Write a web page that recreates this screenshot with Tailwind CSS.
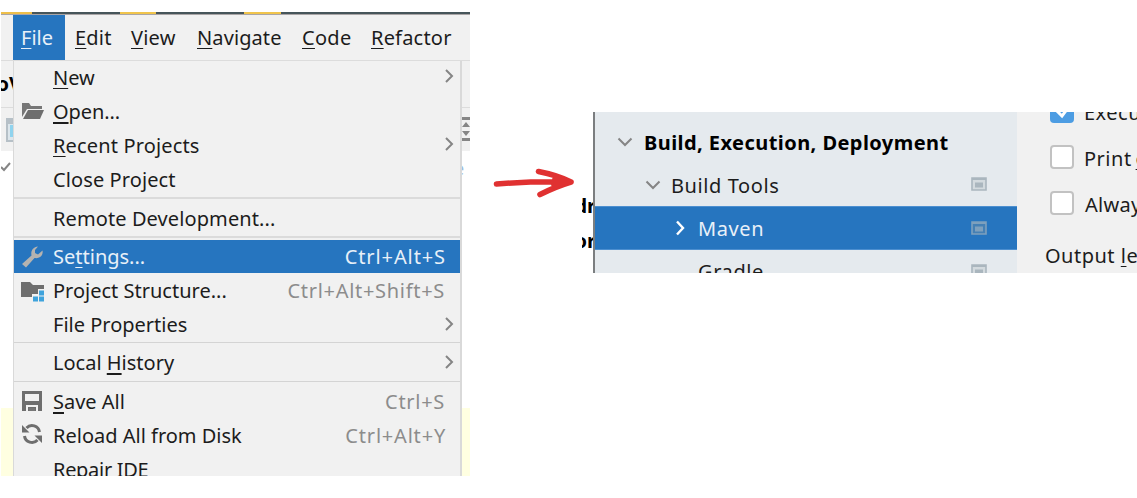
<!DOCTYPE html>
<html lang="en">
<head>
<meta charset="utf-8">
<title>Maven settings</title>
<script src="https://cdn.jsdelivr.net/npm/@tailwindcss/browser@4"></script>
</head>
<body class="relative h-[498px] w-[1137px] overflow-hidden bg-white font-['Noto_Sans','Open_Sans',sans-serif] text-[20px] leading-none whitespace-nowrap text-[#1c1c1c] [&_u]:decoration-1 [&_u]:underline-offset-[3px] [&_u]:[text-decoration-skip-ink:none]">

<div class="flex items-start">
  <!-- IDE window with the File menu open -->
  <section class="relative mt-3 ml-px h-[464px] w-[469px] shrink-0 overflow-hidden bg-white">
    <div class="flex h-[2px] bg-[#46555a]">
      <div class="w-[31px] bg-[#eebf4a]"></div>
      <div class="ml-[88px] w-[36px] bg-[#f0c44c]"></div>
      <div class="ml-[88px] w-[37px] bg-[#f0c44c]"></div>
    </div>
    <nav class="flex h-[47px] items-center border-t border-b border-t-[#a9a5a6] border-b-[#dcdcdc] bg-[#f1f1f1] pl-3">
      <div class="flex h-[45px] w-[52px] items-center bg-[#2675bf] pt-px pl-2 text-[#e8f0f8]"><span><u>F</u>ile</span></div>
      <span class="ml-[10px] w-[56px] pt-px tracking-[0.2px]"><u>E</u>dit</span>
      <span class="w-[66px] pt-px tracking-[0.2px]"><u>V</u>iew</span>
      <span class="w-[105px] pt-px tracking-[0.1px]"><u>N</u>avigate</span>
      <span class="w-[69px] pt-px tracking-[0.3px]"><u>C</u>ode</span>
      <span class="pt-px tracking-[0.2px]"><u>R</u>efactor</span>
    </nav>

    <div class="flex h-[415px]">
      <!-- strip left of the menu -->
      <div class="flex w-3 shrink-0 flex-col overflow-hidden">
        <div class="flex h-[47px] items-center justify-end overflow-hidden border-b border-[#dcdcdc] bg-[#f1f1f1]"><b class="mr-[-9px] text-black">oV</b></div>
        <div class="h-[43px] bg-[#f1f1f1] pt-[10px] pl-[5px]"><div class="h-6 w-5 border-2 border-t-[6px] border-[#b6c0c7] bg-[#dce6ec] p-px"><div class="ml-px h-3 w-4 bg-[#8fd3ee]"></div></div></div>
        <div class="h-[257px] pt-[11px]"><svg class="h-3 w-3" viewBox="0 0 12 12"><path d="M0 5l3 3 6-7" fill="none" stroke="#858585" stroke-width="2"/></svg></div>
        <div class="h-[68px] bg-[#ffffe1]"></div>
      </div>

      <!-- File menu -->
      <div class="w-[449px] shrink-0 border-r-2 border-l border-[#d9d9d9] bg-[#f1f1f1]">
        <div class="flex h-[34px] items-center pl-[39px] pr-[5px]"><span class="flex-1"><u>N</u>ew</span><svg class="-mt-1 h-4 w-3" viewBox="0 0 12 16"><path d="M3 2l6 6-6 6" fill="none" stroke="#858585" stroke-width="2"/></svg></div>
        <div class="flex h-[34px] items-center pl-[7px]">
          <svg class="mr-2 h-6 w-6" viewBox="0 0 24 24"><path d="M1 3h7l2 3h11v3H6L1 17z" fill="#777"/><path d="M7 10h16l-4 9H2z" fill="#6e6e6e"/></svg>
          <span class="-tracking-[0.1px]"><u class="!decoration-2">O</u>pen...</span></div>
        <div class="flex h-[34px] items-center pl-[39px] pr-[5px]"><span class="flex-1 tracking-[0.15px]"><u>R</u>ecent Projects</span><svg class="-mt-1 h-4 w-3" viewBox="0 0 12 16"><path d="M3 2l6 6-6 6" fill="none" stroke="#858585" stroke-width="2"/></svg></div>
        <div class="flex h-[34px] items-center pl-[39px]"><span class="tracking-[0.1px]">Close Project</span></div>
        <div class="h-[3px] border-t-2 border-[#dbdbdb]"></div>
        <div class="flex h-9 items-center pt-px pl-[39px]"><span class="tracking-[0.1px]">Remote Development...</span></div>
        <div class="h-[4px] border-t-2 border-[#dbdbdb]"></div>
        <div class="flex h-[33px] items-center bg-[#2675bf] pl-[7px] text-[#e8f0f8]">
          <svg class="mr-2 h-6 w-6" viewBox="0 0 24 24"><path d="M1 19L10.500 10.500C9.500 6 12 2 17 1.500L14 5v3l3 1.500L21.500 5.500C22.500 10 19 14 13.500 13L5 22.500z" fill="#b5b3b0"/></svg>
          <span class="flex-1">Se<u>t</u>tings...</span><span class="mr-[14px] tracking-[0.9px]">Ctrl+Alt+S</span></div>
        <div class="flex h-[35px] items-center pl-[7px]">
          <svg class="mr-2 h-6 w-6" viewBox="0 0 24 24"><path d="M0 3h9l3 3h11v4h-6v5h-6v3H0z" fill="#6e6e6e"/><path d="M18 11.500h5v5h-5zM18 17.500h5v5h-5zM12 17.500h5v5h-5z" fill="#3fa3dc"/></svg>
          <span class="flex-1">Project Structure...</span><span class="mr-[15px] tracking-[0.7px] text-[#8c8c8c]">Ctrl+Alt+Shift+S</span></div>
        <div class="flex h-[33px] items-center pl-[39px] pr-[5px]"><span class="flex-1">File Properties</span><svg class="-mt-[2px] h-4 w-3" viewBox="0 0 12 16"><path d="M3 2l6 6-6 6" fill="none" stroke="#858585" stroke-width="2"/></svg></div>
        <div class="mt-px h-[3px] border-t border-[#d4d4d4]"></div>
        <div class="flex h-9 items-center pl-[39px] pr-[5px]"><span class="flex-1">Local <u class="!decoration-2">H</u>istory</span><svg class="-mt-[2px] h-4 w-3" viewBox="0 0 12 16"><path d="M3 2l6 6-6 6" fill="none" stroke="#858585" stroke-width="2"/></svg></div>
        <div class="h-[3px] border-t border-[#d4d4d4]"></div>
        <div class="flex h-[35px] items-center pl-[7px]">
          <svg class="-mt-[2px] mr-2 h-6 w-6" viewBox="0 0 24 24"><path fill-rule="evenodd" d="M1 2h20v20H1zM4 5v7h14V5zM5 16v6h2v-4h8v4h2v-6z" fill="#6e6e6e"/><path d="M8 19h6v3H8z" fill="#777"/></svg>
          <span class="flex-1"><u class="!decoration-2">S</u>ave All</span><span class="mr-[15px] tracking-[0.7px] text-[#8c8c8c]">Ctrl+S</span></div>
        <div class="flex h-[34px] items-center pl-[7px]">
          <svg class="-mt-[4px] mr-2 h-6 w-6" viewBox="0 0 24 24"><path d="M5.500 6A7.500 7.500 0 0 1 18.500 10M16.500 18A7.500 7.500 0 0 1 3.500 14" fill="none" stroke="#6e6e6e" stroke-width="3"/><path d="M1 3v7.500h7.500zM21 21v-7.500h-7.500z" fill="#6e6e6e"/></svg>
          <span class="flex-1">Reload All from Disk</span><span class="mr-[14px] tracking-[0.8px] text-[#8c8c8c]">Ctrl+Alt+Y</span></div>
        <div class="flex h-[34px] items-center pl-[39px]"><span class="-tracking-[0.3px]">Repair IDE</span></div>
      </div>

      <!-- strip right of the menu -->
      <div class="flex flex-1 flex-col overflow-hidden">
        <div class="h-[47px] border-b border-[#dcdcdc] bg-[#f1f1f1]"></div>
        <div class="h-[43px] bg-[#f1f1f1] pt-[9px]"><svg class="h-6 w-2" viewBox="0 0 8 24"><path d="M0 0h8v3H0zM0 21h8v3H0zM0 10l4-5 4 5zM0 14l4 5 4-5z" fill="#858585"/></svg></div>
        <div class="h-[257px] pt-[8px]"><div class="-ml-[8px] text-[18px] text-[#9dbbe0]">e</div></div>
        <div class="h-[68px] bg-[#ffffe1]"></div>
      </div>
    </div>
  </section>

  <!-- Hand-drawn arrow -->
  <svg class="mt-[160px] ml-[20px] h-[50px] w-[90px] shrink-0" viewBox="490 160 90 50"><path d="M496.500 184Q535 181 571 182M538.500 171.500Q557 175 571 182Q556 186.500 540 194.500M555 179L571 182L554 185" fill="none" stroke="#e03131" stroke-width="5.600" stroke-linecap="round" stroke-linejoin="round"/></svg>

  <!-- Settings dialog -->
  <section class="mt-[112px] ml-[2px] flex h-[161px] w-[555px] shrink-0 overflow-hidden">
    <div class="flex w-[11px] shrink-0 flex-col items-end overflow-hidden pt-[84px] font-bold text-black"><span class="-mr-[3px]">dr</span><span class="-mr-[3px] mt-[15px]">or</span></div>
    <div class="w-[424px] shrink-0 border-l-2 border-[#7b7e80] bg-[#e5eaee]">
      <div class="flex h-[60px] items-center pl-[22px]"><svg class="mr-[11px] h-4 w-4" viewBox="0 0 16 16"><path d="M1.500 4.500l6.500 6.500 6.500-6.500" fill="none" stroke="#858585" stroke-width="2"/></svg><b class="pt-[2px] tracking-[0.44px] text-black">Build, Execution, Deployment</b></div>
      <div class="flex h-[34px] items-center pb-[8px] pl-[50px] pr-[30px]"><svg class="mr-[10px] h-4 w-4" viewBox="0 0 16 16"><path d="M1.500 4.500l6.500 6.500 6.500-6.500" fill="none" stroke="#858585" stroke-width="2"/></svg><span class="flex-1 pt-[2px] tracking-[0.6px]">Build Tools</span><svg class="-mt-[2px] h-[14px] w-[16px]" viewBox="0 0 16 14"><path d="M1 1h14v12H1z" fill="#d3dade" stroke="#aab6be" stroke-width="1.600"/><path d="M1 1h14v2H1zM4 5.500h8v5H4z" fill="#aab6be"/></svg></div>
      <div class="flex h-[44px] items-center border-y border-[#4c8fd0] bg-[#2675bf] pl-[77px] pr-[30px] text-[#e8f0f8]"><svg class="mr-[10px] h-4 w-4" viewBox="0 0 16 16"><path d="M5 1.500l6 6.500-6 6.500" fill="none" stroke="#fff" stroke-width="2.400"/></svg><span class="flex-1 pt-px tracking-[0.6px]">Maven</span><svg class="h-[14px] w-[16px]" viewBox="0 0 16 14"><path d="M1 1h14v12H1z" fill="#4580b4" stroke="#7ea0bd" stroke-width="1.600"/><path d="M1 1h14v2H1zM4 5.500h8v5H4z" fill="#7ea0bd"/></svg></div>
      <div class="flex h-[42px] items-center pl-[103px] pr-[30px]"><span class="flex-1 pt-[2px] tracking-[0.6px]">Gradle</span><svg class="h-[14px] w-[16px]" viewBox="0 0 16 14"><path d="M1 1h14v12H1z" fill="#d3dade" stroke="#aab6be" stroke-width="1.600"/><path d="M1 1h14v2H1zM4 5.500h8v5H4z" fill="#aab6be"/></svg></div>
    </div>
    <div class="flex flex-1 flex-col overflow-hidden bg-[#f1f1f1] pl-[28px]">
      <div class="-mt-[13px] flex h-6 items-center"><div class="ml-[5px] flex h-6 w-6 shrink-0 items-center justify-center rounded bg-[#4d9de3]"><svg class="mt-1 h-4 w-4" viewBox="0 0 16 16"><path d="M2 5l6 6 6-8" fill="none" stroke="#fff" stroke-width="3"/></svg></div><span class="ml-[10px] pt-[4px] tracking-[0.5px]">Execu</span></div>
      <div class="mt-[22px] flex h-6 items-center"><div class="ml-[5px] h-6 w-6 shrink-0 rounded border-2 border-[#c2c2c2] bg-white"></div><span class="ml-[10px] pt-[4px] tracking-[0.5px]">Print<u class="ml-[4px]">e</u></span></div>
      <div class="mt-[22px] flex h-6 items-center"><div class="ml-[5px] h-6 w-6 shrink-0 rounded border-2 border-[#c2c2c2] bg-white"></div><span class="ml-[11px] pt-[3px] tracking-[0.3px]">Alway</span></div>
      <div class="mt-[31px] tracking-[0.5px]">Output <u>l</u>e</div>
      <div class="mt-auto -ml-[46px] h-px w-[17px] bg-[#c8cccf]"></div>
    </div>
  </section>
</div>
</body>
</html>
